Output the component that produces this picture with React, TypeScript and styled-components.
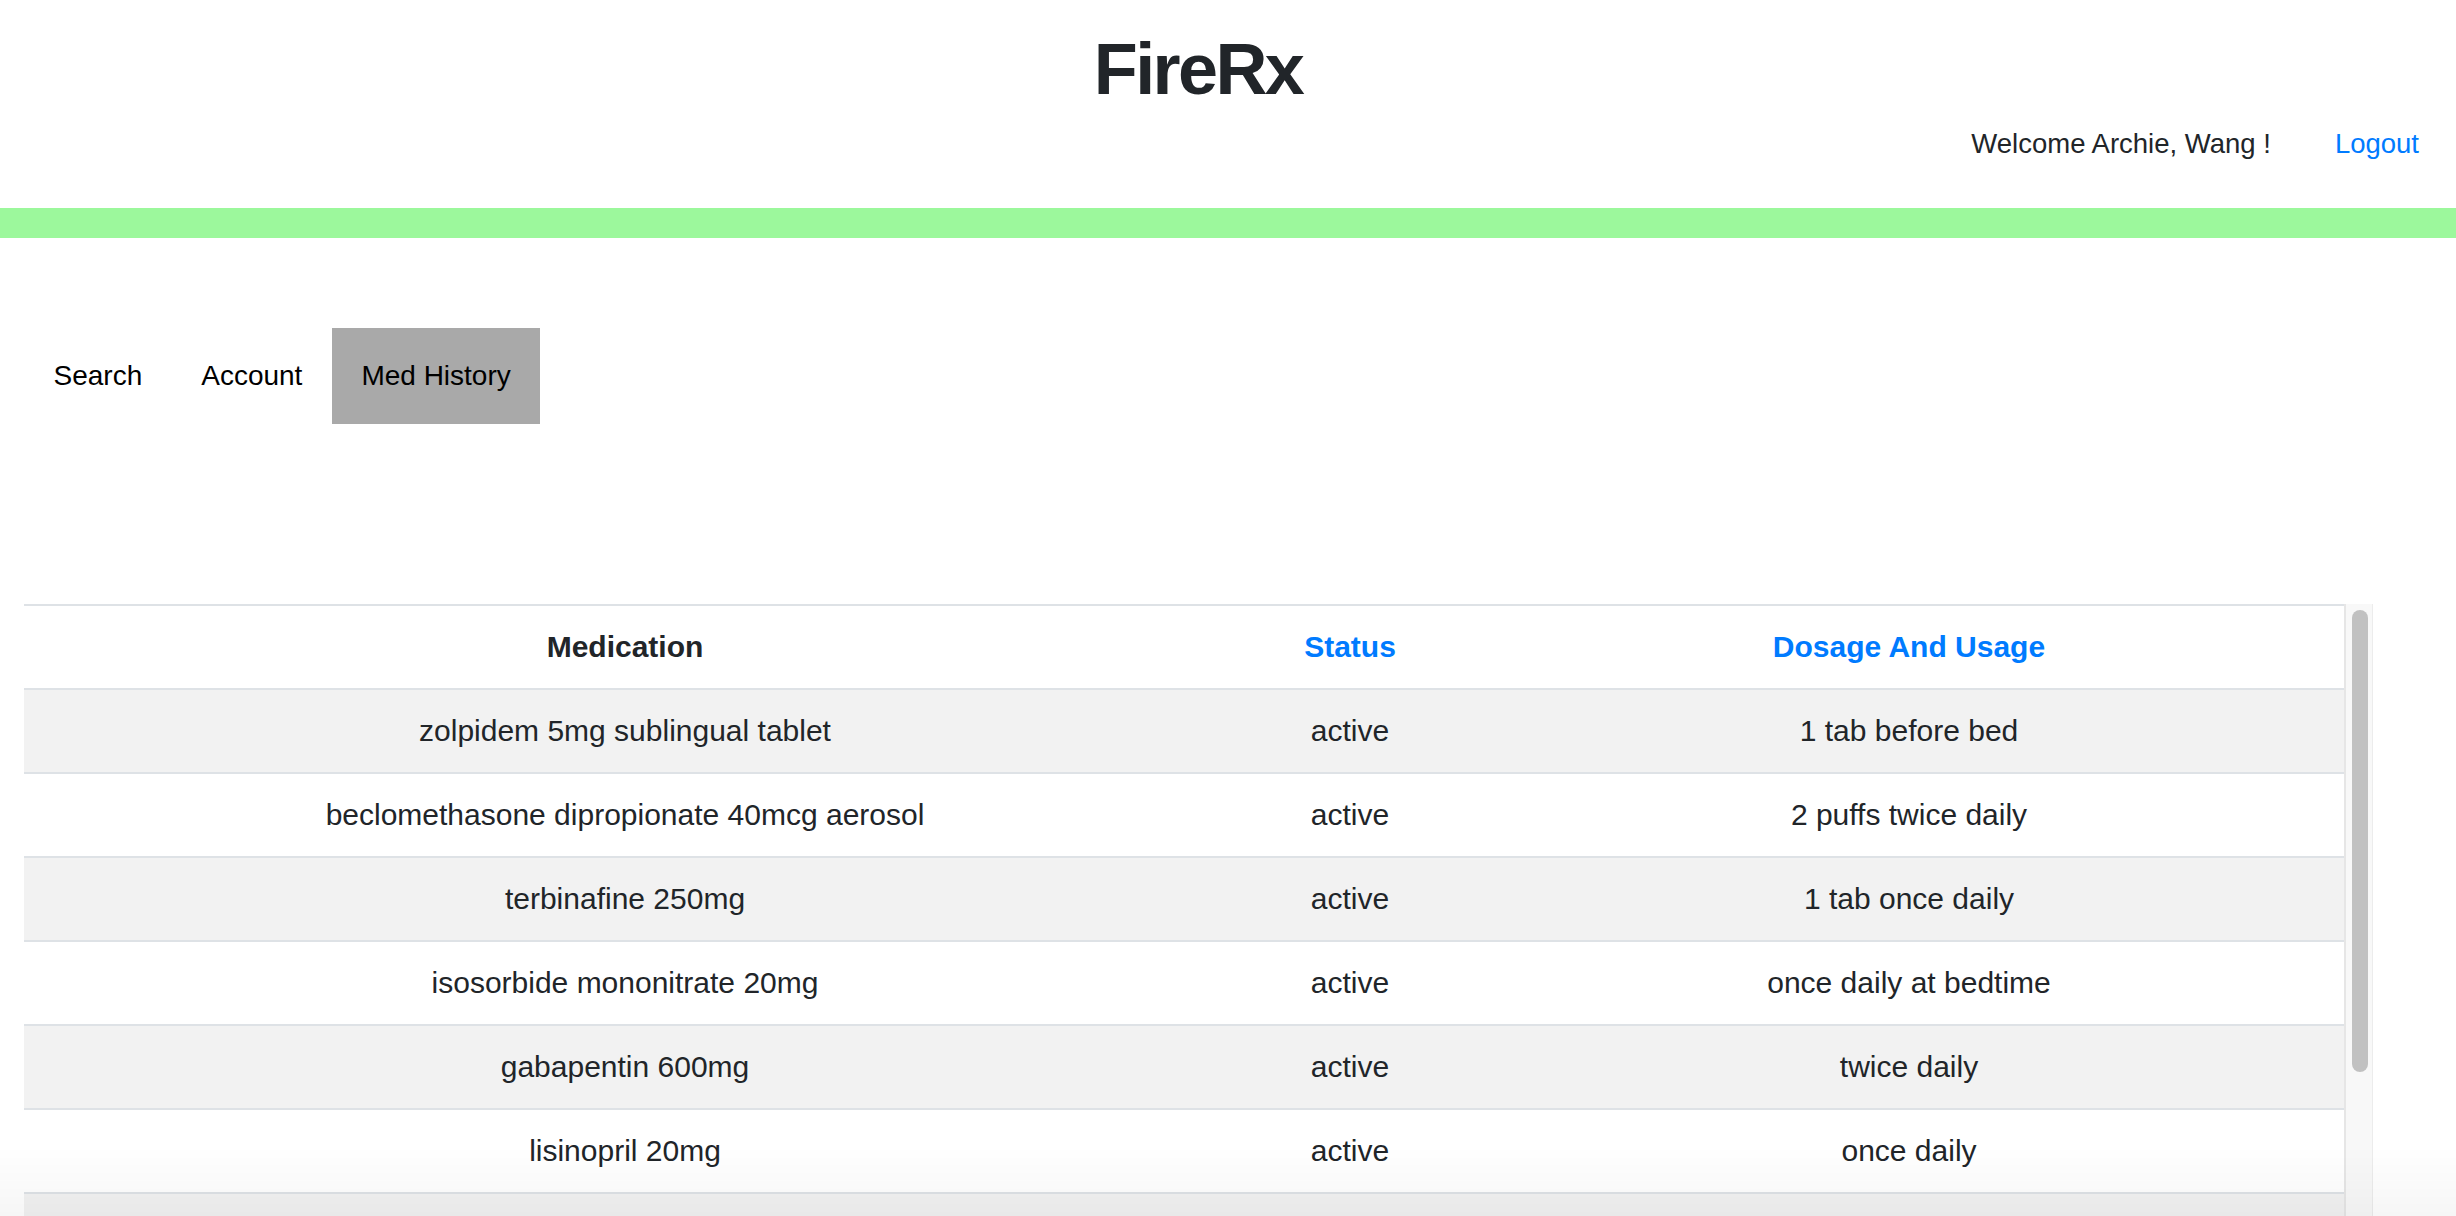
import React from "react";
import styled, { createGlobalStyle } from "styled-components";

const GlobalStyle = createGlobalStyle`
  html, body {
    margin: 0;
    padding: 0;
    height: 100%;
    overflow: hidden;
    background: #ffffff;
  }
  body {
    font-family: "Liberation Sans", Arial, Helvetica, sans-serif;
    color: #212529;
  }
  * { box-sizing: border-box; }
`;

const Page = styled.div`
  width: 100%;
  position: relative;
`;

const Header = styled.header`
  display: flex;
  flex-direction: column;
`;

const Title = styled.h1`
  margin: 26px 0 0;
  padding-right: 60px;
  text-align: center;
  font-size: 72px;
  line-height: 86px;
  font-weight: 700;
  letter-spacing: -2.6px;
  color: #212529;
`;

const UserBar = styled.div`
  display: flex;
  justify-content: flex-end;
  align-items: center;
  gap: 64px;
  margin-top: 11px;
  padding-right: 37px;
  font-size: 27.5px;
  line-height: 41px;
`;

const Welcome = styled.span`
  color: #212529;
`;

const LogoutLink = styled.a`
  color: #007bff;
  text-decoration: none;
  cursor: pointer;
`;

const GreenBar = styled.div`
  margin-top: 44px;
  height: 30px;
  background: #9cf89c;
`;

const Tabs = styled.nav`
  display: flex;
  margin-top: 90px;
  padding-left: 24px;
`;

const Tab = styled.button<{ $active?: boolean }>`
  border: none;
  margin: 0;
  padding: 0 29.5px;
  height: 96px;
  line-height: 96px;
  font-family: "Liberation Sans", Arial, Helvetica, sans-serif;
  font-size: 28px;
  color: #000000;
  background: ${(p) => (p.$active ? "#a9a9a9" : "transparent")};
  cursor: pointer;
`;

const TableFrame = styled.div`
  display: flex;
  margin: 180px 0 0 24px;
  width: 2349px;
  height: 612px;
`;

const TableViewport = styled.div`
  width: 2320px;
  height: 100%;
  overflow: hidden;
`;

const ScrollTrack = styled.div`
  width: 29px;
  height: 100%;
  padding: 6px 4px 0 6px;
  background: #f8f8f8;
  border-left: 2px solid #e6e6e6;
  border-right: 1px solid #ececec;
`;

const ScrollThumb = styled.div`
  width: 16px;
  height: 462px;
  border-radius: 8px;
  background: #c1c1c1;
`;

const Table = styled.table`
  width: 2320px;
  border-collapse: collapse;
  margin-bottom: 32px;
  font-size: 30px;
  line-height: 42px;
  color: #212529;
  table-layout: fixed;
`;

const HeadCell = styled.th<{ $link?: boolean; $width: number }>`
  width: ${(p) => p.$width}px;
  padding: 20px 12px;
  border-top: 2px solid #dee2e6;
  border-bottom: 2px solid #dee2e6;
  text-align: center;
  font-weight: 700;
  color: ${(p) => (p.$link ? "#007bff" : "#212529")};
  cursor: ${(p) => (p.$link ? "pointer" : "default")};
`;

const Row = styled.tr<{ $striped: boolean }>`
  background: ${(p) => (p.$striped ? "#f2f2f2" : "#ffffff")};
`;

const Cell = styled.td`
  padding: 20px 12px;
  border-top: 2px solid #dee2e6;
  text-align: center;
  font-weight: 400;
`;

const BottomShade = styled.div`
  position: fixed;
  left: 0;
  right: 0;
  bottom: 0;
  height: 70px;
  pointer-events: none;
  background: linear-gradient(to bottom, rgba(0, 0, 0, 0), rgba(0, 0, 0, 0.035));
`;

const meds = [
  { name: "zolpidem 5mg sublingual tablet", status: "active", dosage: "1 tab before bed" },
  { name: "beclomethasone dipropionate 40mcg aerosol", status: "active", dosage: "2 puffs twice daily" },
  { name: "terbinafine 250mg", status: "active", dosage: "1 tab once daily" },
  { name: "isosorbide mononitrate 20mg", status: "active", dosage: "once daily at bedtime" },
  { name: "gabapentin 600mg", status: "active", dosage: "twice daily" },
  { name: "lisinopril 20mg", status: "active", dosage: "once daily" },
  { name: "metformin 500mg", status: "active", dosage: "twice daily with meals" },
];

export default function App() {
  return (
    <Page>
      <GlobalStyle />
      <Header>
        <Title>FireRx</Title>
        <UserBar>
          <Welcome>Welcome Archie, Wang !</Welcome>
          <LogoutLink>Logout</LogoutLink>
        </UserBar>
      </Header>
      <GreenBar />
      <Tabs>
        <Tab>Search</Tab>
        <Tab>Account</Tab>
        <Tab $active>Med History</Tab>
      </Tabs>
      <TableFrame>
        <TableViewport>
          <Table>
            <thead>
              <tr>
                <HeadCell $width={1202}>Medication</HeadCell>
                <HeadCell $width={248} $link>
                  Status
                </HeadCell>
                <HeadCell $width={870} $link>
                  Dosage And Usage
                </HeadCell>
              </tr>
            </thead>
            <tbody>
              {meds.map((m, i) => (
                <Row key={m.name} $striped={i % 2 === 0}>
                  <Cell>{m.name}</Cell>
                  <Cell>{m.status}</Cell>
                  <Cell>{m.dosage}</Cell>
                </Row>
              ))}
            </tbody>
          </Table>
        </TableViewport>
        <ScrollTrack>
          <ScrollThumb />
        </ScrollTrack>
      </TableFrame>
      <BottomShade />
    </Page>
  );
}
